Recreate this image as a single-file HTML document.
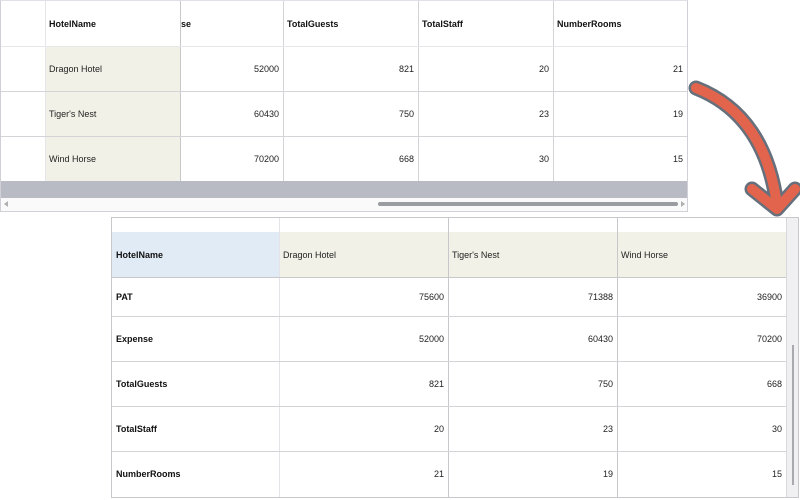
<!DOCTYPE html>
<html><head><style>
*{margin:0;padding:0;box-sizing:border-box}
body{width:800px;height:500px;background:#fff;position:relative;overflow:hidden;font-family:"Liberation Sans",sans-serif;font-size:9px;color:#222}
.a{position:absolute}
.c{position:absolute;display:flex;align-items:center;padding:0 4px;white-space:nowrap}
.r{justify-content:flex-end}
.b{font-weight:bold;font-size:9px;color:#111}
.hl{position:absolute;height:1px;background:#d4d4d8}
.vl{position:absolute;width:1px;background:#d4d4d8}
</style></head><body>
<!-- top grid -->
<div class="a" style="left:0;top:0;width:688px;height:212px;border:1px solid #d0d0d6;border-top-color:#e0e0e6"></div>
<div class="a" style="left:45px;top:46px;width:135px;height:135px;background:#f1f1e7"></div>
<div class="vl" style="left:45px;top:1px;height:180px;background:#e6e6ea"></div>
<div class="vl" style="left:180px;top:1px;height:180px;background:#c8c8cc"></div>
<div class="vl" style="left:283px;top:1px;height:180px"></div>
<div class="vl" style="left:418px;top:1px;height:180px"></div>
<div class="vl" style="left:553px;top:1px;height:180px"></div>
<div class="hl" style="left:1px;top:46px;width:686px;background:#e8e8ec"></div>
<div class="hl" style="left:1px;top:91px;width:686px"></div>
<div class="hl" style="left:1px;top:136px;width:686px"></div>
<div class="a" style="left:1px;top:181px;width:686px;height:17px;background:#b8bbc3"></div>
<div class="a" style="left:1px;top:198px;width:686px;height:13px;background:#fafafa"></div>
<div class="a" style="left:378px;top:202px;width:300px;height:4px;border-radius:2px;background:#9a9ca0"></div>
<div class="a" style="left:4px;top:201px;width:0;height:0;border-top:3px solid transparent;border-bottom:3px solid transparent;border-right:4px solid #b0b0b0"></div>
<div class="a" style="left:681px;top:201px;width:0;height:0;border-top:3px solid transparent;border-bottom:3px solid transparent;border-left:4px solid #b0b0b0"></div>
<div class="c b" style="left:45px;top:1px;height:45px">HotelName</div>
<div class="c b" style="left:177px;top:1px;height:45px">se</div>
<div class="c b" style="left:283px;top:1px;height:45px">TotalGuests</div>
<div class="c b" style="left:418px;top:1px;height:45px">TotalStaff</div>
<div class="c b" style="left:553px;top:1px;height:45px">NumberRooms</div>
<div class="c" style="left:45px;top:46px;height:45px">Dragon Hotel</div>
<div class="c" style="left:45px;top:91px;height:45px">Tiger's Nest</div>
<div class="c" style="left:45px;top:136px;height:45px">Wind Horse</div>
<div class="c r" style="left:180px;width:103px;top:46px;height:45px">52000</div>
<div class="c r" style="left:180px;width:103px;top:91px;height:45px">60430</div>
<div class="c r" style="left:180px;width:103px;top:136px;height:45px">70200</div>
<div class="c r" style="left:283px;width:135px;top:46px;height:45px">821</div>
<div class="c r" style="left:283px;width:135px;top:91px;height:45px">750</div>
<div class="c r" style="left:283px;width:135px;top:136px;height:45px">668</div>
<div class="c r" style="left:418px;width:135px;top:46px;height:45px">20</div>
<div class="c r" style="left:418px;width:135px;top:91px;height:45px">23</div>
<div class="c r" style="left:418px;width:135px;top:136px;height:45px">30</div>
<div class="c r" style="left:553px;width:134px;top:46px;height:45px">21</div>
<div class="c r" style="left:553px;width:134px;top:91px;height:45px">19</div>
<div class="c r" style="left:553px;width:134px;top:136px;height:45px">15</div>

<!-- bottom grid -->
<div class="a" style="left:111px;top:217px;width:688px;height:281px;border:1px solid #c8c8cc"></div>
<div class="a" style="left:112px;top:232px;width:167px;height:45px;background:#e0ebf5"></div>
<div class="a" style="left:279px;top:232px;width:507px;height:45px;background:#f1f1e7"></div>
<div class="a" style="left:786px;top:218px;width:12px;height:279px;background:#f0f0f2;border-left:1px solid #d8d8dc"></div>
<div class="a" style="left:792px;top:345px;width:2px;height:140px;background:#a8aab0"></div>
<div class="vl" style="left:279px;top:218px;height:279px;background:#e4e4e8"></div>
<div class="vl" style="left:448px;top:218px;height:279px;background:#c8c8cc"></div>
<div class="vl" style="left:617px;top:218px;height:279px;background:#c8c8cc"></div>
<div class="hl" style="left:112px;top:277px;width:674px;background:#c8c8cc"></div>
<div class="hl" style="left:112px;top:316px;width:674px"></div>
<div class="hl" style="left:112px;top:361px;width:674px"></div>
<div class="hl" style="left:112px;top:406px;width:674px"></div>
<div class="hl" style="left:112px;top:451px;width:674px"></div>
<div class="c b" style="left:112px;top:232px;height:45px">HotelName</div>
<div class="c" style="left:279px;top:232px;height:45px">Dragon Hotel</div>
<div class="c" style="left:448px;top:232px;height:45px">Tiger's Nest</div>
<div class="c" style="left:617px;top:232px;height:45px">Wind Horse</div>
<div class="c b" style="left:112px;top:277px;height:39px">PAT</div>
<div class="c b" style="left:112px;top:316px;height:45px">Expense</div>
<div class="c b" style="left:112px;top:361px;height:45px">TotalGuests</div>
<div class="c b" style="left:112px;top:406px;height:45px">TotalStaff</div>
<div class="c b" style="left:112px;top:451px;height:45px">NumberRooms</div>

<div class="c r" style="left:279px;width:169px;top:277px;height:39px">75600</div>
<div class="c r" style="left:448px;width:169px;top:277px;height:39px">71388</div>
<div class="c r" style="left:617px;width:169px;top:277px;height:39px">36900</div>
<div class="c r" style="left:279px;width:169px;top:316px;height:45px">52000</div>
<div class="c r" style="left:448px;width:169px;top:316px;height:45px">60430</div>
<div class="c r" style="left:617px;width:169px;top:316px;height:45px">70200</div>
<div class="c r" style="left:279px;width:169px;top:361px;height:45px">821</div>
<div class="c r" style="left:448px;width:169px;top:361px;height:45px">750</div>
<div class="c r" style="left:617px;width:169px;top:361px;height:45px">668</div>
<div class="c r" style="left:279px;width:169px;top:406px;height:45px">20</div>
<div class="c r" style="left:448px;width:169px;top:406px;height:45px">23</div>
<div class="c r" style="left:617px;width:169px;top:406px;height:45px">30</div>
<div class="c r" style="left:279px;width:169px;top:451px;height:45px">21</div>
<div class="c r" style="left:448px;width:169px;top:451px;height:45px">19</div>
<div class="c r" style="left:617px;width:169px;top:451px;height:45px">15</div>

<!-- arrow -->
<svg class="a" style="left:0;top:0" width="800" height="500">
<g fill="none" stroke-linecap="round" stroke-linejoin="round">
<path d="M696 88 Q765 115 777 205 M752 189 L777 209 L795 189" stroke="#66707c" stroke-width="15"/>
<path d="M696 88 Q765 115 777 205 M752 189 L777 209 L795 189" stroke="#e2644c" stroke-width="10"/>
</g></svg>
</body></html>
